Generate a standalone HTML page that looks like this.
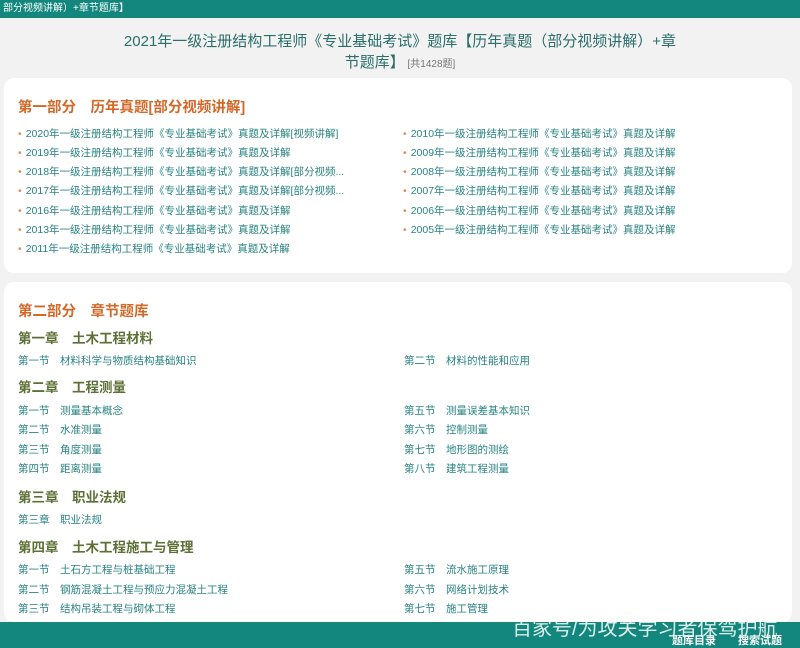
<!DOCTYPE html>
<html><head><meta charset="utf-8"><style>
body{margin:0;width:800px;height:648px;overflow:hidden;background:#f2f2f2;font-family:"Liberation Sans","Noto Sans CJK SC",sans-serif;position:relative}
.a{position:absolute;white-space:nowrap}
.top{position:absolute;left:0;top:0;width:800px;height:18px;background:#13877d;color:#fff;font-size:10px;line-height:17px;padding-left:3px}
.title{position:absolute;left:0;width:800px;text-align:center;color:#2b6e6a;font-size:15px}
.card{position:absolute;left:4px;width:788px;background:#fff;border-radius:10px}
.h{color:#d2692a;font-weight:bold;font-size:14.5px}
.c{color:#5d7035;font-weight:bold;font-size:13.5px}
.i{color:#2a8383;font-size:10.5px}
.i b{color:#e09050;font-weight:normal;margin-right:4px}
.foot{position:absolute;left:0;top:622px;width:800px;height:26px;background:#13877d}
</style></head><body>
<div class="top">部分视频讲解）+章节题库】</div>
<div class="title" style="top:30px">2021年一级注册结构工程师《专业基础考试》题库【历年真题（部分视频讲解）+章</div>
<div class="title" style="top:51px">节题库】<span style="font-size:10px;color:#777">&nbsp;[共1428题]</span></div>
<div class="card" style="top:78px;height:195px"></div>
<div class="card" style="top:282px;height:340px"></div>
<div class="a h" style="left:18px;top:96px">第一部分　历年真题[部分视频讲解]</div>
<div class="a i" style="left:18px;top:126px"><b>•</b>2020年一级注册结构工程师《专业基础考试》真题及详解[视频讲解]</div>
<div class="a i" style="left:18px;top:145px"><b>•</b>2019年一级注册结构工程师《专业基础考试》真题及详解</div>
<div class="a i" style="left:18px;top:164px"><b>•</b>2018年一级注册结构工程师《专业基础考试》真题及详解[部分视频...</div>
<div class="a i" style="left:18px;top:183px"><b>•</b>2017年一级注册结构工程师《专业基础考试》真题及详解[部分视频...</div>
<div class="a i" style="left:18px;top:203px"><b>•</b>2016年一级注册结构工程师《专业基础考试》真题及详解</div>
<div class="a i" style="left:18px;top:222px"><b>•</b>2013年一级注册结构工程师《专业基础考试》真题及详解</div>
<div class="a i" style="left:18px;top:241px"><b>•</b>2011年一级注册结构工程师《专业基础考试》真题及详解</div>
<div class="a i" style="left:403px;top:126px"><b>•</b>2010年一级注册结构工程师《专业基础考试》真题及详解</div>
<div class="a i" style="left:403px;top:145px"><b>•</b>2009年一级注册结构工程师《专业基础考试》真题及详解</div>
<div class="a i" style="left:403px;top:164px"><b>•</b>2008年一级注册结构工程师《专业基础考试》真题及详解</div>
<div class="a i" style="left:403px;top:183px"><b>•</b>2007年一级注册结构工程师《专业基础考试》真题及详解</div>
<div class="a i" style="left:403px;top:203px"><b>•</b>2006年一级注册结构工程师《专业基础考试》真题及详解</div>
<div class="a i" style="left:403px;top:222px"><b>•</b>2005年一级注册结构工程师《专业基础考试》真题及详解</div>
<div class="a h" style="left:18px;top:300px">第二部分　章节题库</div>
<div class="a c" style="left:18px;top:327px">第一章　土木工程材料</div>
<div class="a i" style="left:18px;top:353px">第一节　材料科学与物质结构基础知识</div>
<div class="a i" style="left:404px;top:353px">第二节　材料的性能和应用</div>
<div class="a c" style="left:18px;top:376px">第二章　工程测量</div>
<div class="a i" style="left:18px;top:403px">第一节　测量基本概念</div>
<div class="a i" style="left:18px;top:422px">第二节　水准测量</div>
<div class="a i" style="left:18px;top:442px">第三节　角度测量</div>
<div class="a i" style="left:18px;top:461px">第四节　距离测量</div>
<div class="a i" style="left:404px;top:403px">第五节　测量误差基本知识</div>
<div class="a i" style="left:404px;top:422px">第六节　控制测量</div>
<div class="a i" style="left:404px;top:442px">第七节　地形图的测绘</div>
<div class="a i" style="left:404px;top:461px">第八节　建筑工程测量</div>
<div class="a c" style="left:18px;top:486px">第三章　职业法规</div>
<div class="a i" style="left:18px;top:512px">第三章　职业法规</div>
<div class="a c" style="left:18px;top:536px">第四章　土木工程施工与管理</div>
<div class="a i" style="left:18px;top:562px">第一节　土石方工程与桩基础工程</div>
<div class="a i" style="left:18px;top:582px">第二节　钢筋混凝土工程与预应力混凝土工程</div>
<div class="a i" style="left:18px;top:601px">第三节　结构吊装工程与砌体工程</div>
<div class="a i" style="left:404px;top:562px">第五节　流水施工原理</div>
<div class="a i" style="left:404px;top:582px">第六节　网络计划技术</div>
<div class="a i" style="left:404px;top:601px">第七节　施工管理</div>
<div class="foot"></div>
<div class="a" style="left:512px;top:612px;color:#fff;font-size:20px;opacity:.85">百家号/为攻关学习者保驾护航</div>
<div class="a" style="left:672px;top:632px;color:#fff;font-size:11px;font-weight:bold">题库目录　　搜索试题</div>
</body></html>
